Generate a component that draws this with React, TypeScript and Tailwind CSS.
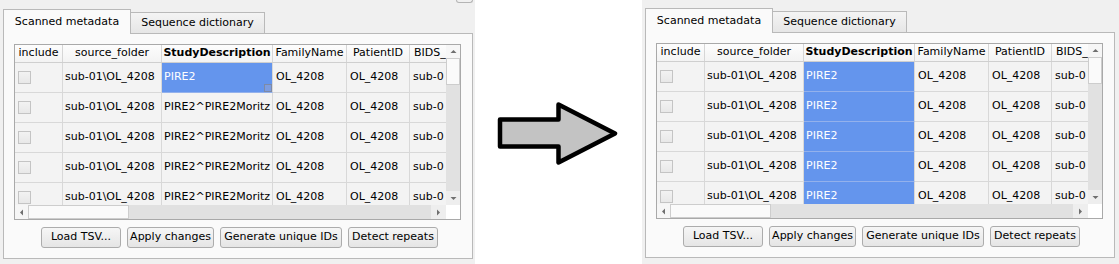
import React from "react";

type Col = { key: string; label: string; cls: string; bold?: boolean };

const cols: Col[] = [
  { key: "include", label: "include", cls: "w-[48px]" },
  { key: "source", label: "source_folder", cls: "w-[99px]" },
  { key: "study", label: "StudyDescription", cls: "w-[111px]", bold: true },
  { key: "family", label: "FamilyName", cls: "w-[74px]" },
  { key: "patient", label: "PatientID", cls: "w-[63px]" },
  { key: "bids", label: "BIDS_", cls: "w-[36px]" },
];

const Tri = ({ dir }: { dir: "up" | "down" | "left" | "right" }) => {
  const pts = {
    up: "0.5,5 3.5,2 6.5,5",
    down: "0.5,2 3.5,5 6.5,2",
    left: "5,0.5 2,3.5 5,6.5",
    right: "2,0.5 5,3.5 2,6.5",
  }[dir];
  return (
    <svg width="7" height="7" viewBox="0 0 7 7">
      <polygon points={pts} fill="#6f6f6f" />
    </svg>
  );
};

const Checkbox = () => (
  <div className="ml-[3px] size-[13px] border border-[#c4c4c4] bg-gradient-to-b from-[#f2f2f2] to-[#e8e8e8]" />
);

const Table = ({ allSelected }: { allSelected: boolean }) => {
  const rows = [0, 1, 2, 3, 4];
  return (
    <div className="flex h-[176px] w-[447px] flex-col border border-[#a9a9a9] bg-white">
      <div className="flex h-[160px]">
        <div className="flex w-[431px] flex-col">
          {/* header */}
          <div className="flex h-[18px] border-b border-[#cfcfcf] bg-gradient-to-b from-[#fdfdfd] to-[#f3f3f3]">
            {cols.map((c, i) => (
              <div
                key={c.key}
                className={`${c.cls} flex shrink-0 items-center overflow-hidden whitespace-nowrap ${
                  i < cols.length - 1 ? "border-r border-[#d6d6d6] justify-center" : "pl-[4px]"
                } ${c.bold ? "font-bold" : ""}`}
              >
                {c.label}
              </div>
            ))}
          </div>
          {/* body */}
          <div className="h-[142px] overflow-hidden bg-[#f3f3f3]">
            {rows.map((r) => {
              const studySel = allSelected || r === 0;
              const studyText = allSelected || r === 0 ? "PIRE2" : "PIRE2^PIRE2Moritz";
              return (
                <div key={r} className="flex h-[30px] shrink-0">
                  <div className="flex w-[48px] shrink-0 items-center border-r border-b border-[#d8d8d8]">
                    <Checkbox />
                  </div>
                  <div className="flex w-[99px] shrink-0 items-center overflow-hidden whitespace-nowrap border-r border-b border-[#d8d8d8] px-[2px]">
                    sub-01\OL_4208
                  </div>
                  <div
                    className={`relative flex w-[111px] shrink-0 items-center overflow-hidden whitespace-nowrap border-r px-[2px] ${
                      studySel
                        ? "border-b border-r-[#d8d8d8] border-b-[#93b1ec] bg-[#6495ed] text-white"
                        : "border-b border-[#d8d8d8]"
                    }`}
                  >
                    {studyText}
                    {!allSelected && r === 0 && (
                      <div className="absolute right-0 bottom-0 size-[8px] border border-[#7d8aa6] bg-[#7d9de0]" />
                    )}
                  </div>
                  <div className="flex w-[74px] shrink-0 items-center overflow-hidden whitespace-nowrap border-r border-b border-[#d8d8d8] px-[3px]">
                    OL_4208
                  </div>
                  <div className="flex w-[63px] shrink-0 items-center overflow-hidden whitespace-nowrap border-r border-b border-[#d8d8d8] px-[3px]">
                    OL_4208
                  </div>
                  <div className="flex w-[36px] shrink-0 items-center overflow-hidden whitespace-nowrap border-b border-[#d8d8d8] pl-[3px]">
                    sub-0
                  </div>
                </div>
              );
            })}
          </div>
        </div>
        {/* vertical scrollbar */}
        <div className="flex w-[14px] flex-col bg-[#e1e1e1]">
          <div className="flex h-[13px] items-center justify-center bg-[#f6f6f6]">
            <Tri dir="up" />
          </div>
          <div className="h-[27px] border border-[#cdcdcd] bg-[#fafafa]" />
          <div className="flex-1" />
          <div className="flex h-[14px] items-center justify-center bg-[#eeeeee]">
            <Tri dir="down" />
          </div>
        </div>
      </div>
      {/* horizontal scrollbar */}
      <div className="flex h-[14px]">
        <div className="flex w-[431px] bg-[#e1e1e1]">
          <div className="flex w-[13px] items-center justify-center bg-[#f6f6f6]">
            <Tri dir="left" />
          </div>
          <div className="w-[101px] border border-[#cdcdcd] bg-[#fafafa]" />
          <div className="flex-1" />
          <div className="flex w-[15px] items-center justify-center bg-[#eeeeee]">
            <Tri dir="right" />
          </div>
        </div>
        <div className="w-[14px] bg-white" />
      </div>
    </div>
  );
};

const Button = ({ label, cls }: { label: string; cls: string }) => (
  <button
    className={`${cls} flex h-[21px] shrink-0 items-center justify-center rounded-[3px] border border-[#acacac] bg-gradient-to-b from-[#f6f6f6] to-[#e5e5e5] text-black`}
  >
    {label}
  </button>
);

const Panel = ({ allSelected, topCls, nub }: { allSelected: boolean; topCls: string; nub: boolean }) => (
  <div className="flex w-full flex-col pl-[3px]">
    <div className={`${topCls} flex w-[470px] justify-end`}>
      {nub && <div className="h-[3px] w-[17px] rounded-b-[3px] border-x border-b border-[#b4b4b4]" />}
    </div>
    {/* tabs */}
    <div className="flex h-[24px] items-end">
      <div className="relative z-10 -mb-px flex h-[25px] w-[128px] items-center justify-center border-x border-t border-[#b9b9b9] bg-[#fafafa]">
        Scanned metadata
      </div>
      <div className="flex h-[21px] w-[134px] items-center justify-center border-t border-r border-[#b9b9b9] bg-gradient-to-b from-[#f4f4f4] to-[#e6e6e6] pt-[1px]">
        Sequence dictionary
      </div>
    </div>
    {/* pane */}
    <div className="flex h-[226px] w-[470px] flex-col border border-[#b9b9b9] bg-[#fafafa] pt-[10px] pl-[10px]">
      <Table allSelected={allSelected} />
      <div className="mt-[7px] flex w-[447px] justify-center gap-[6px] pl-[4px]">
        <Button label="Load TSV..." cls="w-[80px]" />
        <Button label="Apply changes" cls="w-[87px]" />
        <Button label="Generate unique IDs" cls="w-[122px]" />
        <Button label="Detect repeats" cls="w-[90px]" />
      </div>
    </div>
  </div>
);

const Arrow = () => (
  <svg width="167" height="264" viewBox="0 0 167 264">
    <polygon
      points="25,119.5 83.5,119.5 83.5,104.5 140,133.5 83.5,162.5 83.5,146.5 25,146.5"
      fill="#c3c3c3"
      stroke="#000"
      strokeWidth="4.5"
      strokeLinejoin="round"
    />
  </svg>
);

export default function App() {
  return (
    <div className="flex h-[264px] w-[1119px] overflow-hidden bg-white font-['DejaVu_Sans',sans-serif] text-[11px] text-black">
      <div className="h-full w-[475px] shrink-0 bg-[#f0f0f0]">
        <Panel allSelected={false} topCls="h-[9px]" nub />
      </div>
      <div className="w-[167px] shrink-0">
        <Arrow />
      </div>
      <div className="h-full w-[477px] shrink-0 bg-[#f0f0f0]">
        <Panel allSelected topCls="h-[8px]" nub={false} />
      </div>
    </div>
  );
}
